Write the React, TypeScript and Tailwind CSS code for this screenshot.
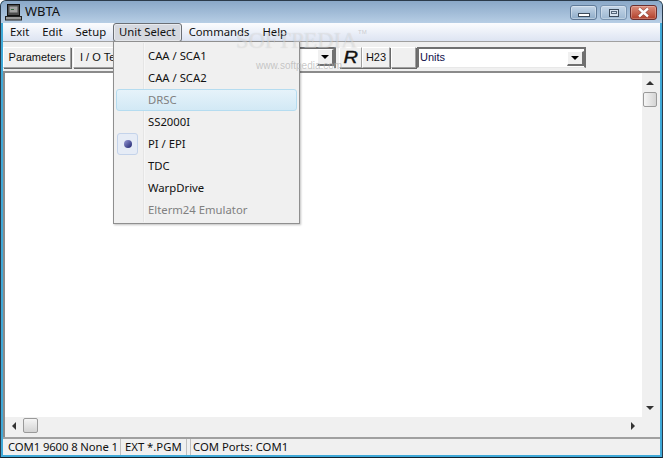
import { useState } from "react";

const menus = ["Exit", "Edit", "Setup", "Unit Select", "Commands", "Help"];

const units = [
  { label: "CAA / SCA1" },
  { label: "CAA / SCA2" },
  { label: "DRSC", disabled: true, hot: true },
  { label: "SS2000I" },
  { label: "PI / EPI", checked: true },
  { label: "TDC" },
  { label: "WarpDrive" },
  { label: "Elterm24 Emulator", disabled: true },
];

function CaptionButtons() {
  return (
    <div className="flex self-start gap-[3px] mr-[5px] mt-[4px]">
      <div className="w-[27px] h-[15px] rounded-[3px] border border-[#5f7a98] shadow-[inset_0_0_0_1px_rgba(255,255,255,0.35)] bg-gradient-to-b from-[#c5d6e8] to-[#8dabc8] flex items-end justify-center pb-[2px]">
        <div className="w-[12px] h-[4px] border border-[#3c4a5a] bg-white" />
      </div>
      <div className="w-[27px] h-[15px] rounded-[3px] border border-[#7893b0] shadow-[inset_0_0_0_1px_rgba(255,255,255,0.3)] bg-gradient-to-b from-[#c5d6e8] to-[#9db8d2] flex items-center justify-center">
        <div className="w-[10px] h-[8px] border border-[#3c4a5a] bg-[#d7e2ee] flex items-center justify-center">
          <div className="w-[6px] h-[3px] border border-[#56677a]" />
        </div>
      </div>
      <div className="w-[27px] h-[15px] rounded-[3px] border border-[#6b2e2e] shadow-[inset_0_0_0_1px_rgba(255,255,255,0.25)] bg-gradient-to-b from-[#dc8d7c] to-[#b03d28] flex items-center justify-center">
        <svg width="15" height="11" viewBox="0 0 15 11">
          <path d="M3 1.5l9 8M12 1.5l-9 8" stroke="#5a2a2a" strokeWidth="3.6" strokeOpacity="0.6" />
          <path d="M3 1.5l9 8M12 1.5l-9 8" stroke="#fff" strokeWidth="2.4" />
        </svg>
      </div>
    </div>
  );
}

function ToolButton({ children, className }: { children?: React.ReactNode; className: string }) {
  return (
    <div
      className={`h-[21px] flex items-center justify-center bg-[#f0f0f0] border border-t-white border-l-white border-r-[#a0a0a0] border-b-[#a0a0a0] shadow-[1px_1px_0_#696969] text-[11px] text-[#111] ${className}`}
    >
      {children}
    </div>
  );
}

function ComboArrow({ className }: { className?: string }) {
  return (
    <div
      className={`w-[17px] bg-[#f0f0f0] border-t border-l border-t-white border-l-white border-r-2 border-b-2 border-r-[#707070] border-b-[#707070] flex items-center justify-center ${className}`}
    >
      <div className="border-x-[4px] border-x-transparent border-t-[4px] border-t-black" />
    </div>
  );
}

export default function App() {
  const [unit] = useState("PI / EPI");

  return (
    <div className="relative w-[663px] h-[458px] overflow-hidden flex flex-col bg-[#3fa9d8] font-['Noto_Sans',sans-serif] border border-t-[#2b3a4a] border-x-[#2b3a4a] border-b-[#10202c] rounded-t-[6px]">
      {/* title bar */}
      <div className="h-[22px] flex items-center pl-[4px] shrink-0 bg-gradient-to-b from-[#8aa8c8] to-[#b7cee5]">
        <svg width="17" height="17" viewBox="0 0 17 17" className="mr-[3px]">
          <rect x="2.5" y="0.5" width="12" height="11" fill="#4d4d4d" stroke="#111" />
          <rect x="4.5" y="2.5" width="8" height="6" fill="#a3a3a3" />
          <rect x="6" y="5" width="3" height="1" fill="#3a6f46" />
          <rect x="0.5" y="12.5" width="16" height="3.5" fill="#9a9a9a" stroke="#222" />
        </svg>
        <span className="text-[13px] text-[#111] flex-1">WBTA</span>
        <CaptionButtons />
      </div>

      <div className="h-[432px] mx-[2px] bg-[#f0f0f0] flex flex-col min-h-0">
        {/* menu bar */}
        <div className="h-[19px] flex items-center bg-gradient-to-b from-[#fbfcfe] to-[#dde4f2] border-b border-[#a0a0a0] text-[11.3px] text-[#111] shrink-0 pl-[0.5px]">
          {menus.map((m) => (
            <div
              key={m}
              className={`h-[19px] flex items-center ${
                m === "Unit Select"
                  ? "mx-[0.5px] px-[5px] rounded-[3px] bg-[#d5d8df] border border-[#6b6f75] shadow-[inset_0_0_0_1px_#e8eaee]"
                  : "px-[6.5px]"
              }`}
            >
              {m}
            </div>
          ))}
        </div>

        {/* toolbar */}
        <div className="h-[31px] flex items-start pt-[5px] border-b-2 border-[#8b8b8b] shrink-0 font-['Liberation_Sans',sans-serif]">
          <ToolButton className="w-[68px]">Parameters</ToolButton>
          <ToolButton className="w-[60px] ml-[2px] justify-start pl-[6px]">I / O Test</ToolButton>
          <div className="w-[201px] ml-[2px] h-[21px] bg-white border-t-2 border-x-2 border-[#707070] flex items-start justify-end">
            <ComboArrow className="h-[17px]" />
          </div>
          <ToolButton className="w-[23px] ml-[3px]">
            <span className="italic text-[16px] scale-x-125 [-webkit-text-stroke:0.4px_#111]">R</span>
          </ToolButton>
          <ToolButton className="w-[28px]">H23</ToolButton>
          <ToolButton className="w-[25px] ml-[1px]" />
          <div className="w-[169px] ml-[1px] h-[21px] bg-white border-t-2 border-x-2 border-[#707070] border-b border-b-[#e8e8e8] flex items-start justify-between pl-[1px] text-[11px] text-[#10104a] leading-[17px]">
            <span>Units</span>
            <ComboArrow className="h-[15px] mt-[2px]" />
          </div>
        </div>

        {/* client */}
        <div className="flex-1 flex flex-col min-h-0 border-l-2 border-l-[#8b8b8b]">
          <div className="flex-1 flex min-h-0">
            <div className="flex-1 bg-white" />
            <div className="w-[18px] pr-[2px] bg-[#f0f0f0] flex flex-col items-center pt-[8px]">
              <div className="border-x-[4px] border-x-transparent border-b-[4px] border-b-[#333]" />
              <div className="mt-[7px] w-[14px] h-[15px] rounded-[2px] border border-[#9a9a9a] bg-gradient-to-r from-[#f5f5f5] to-[#d4d4d4]" />
              <div className="flex-1" />
              <div className="mb-[7px] border-x-[4px] border-x-transparent border-t-[4px] border-t-[#333]" />
            </div>
          </div>
          <div className="h-[20px] flex items-start pt-[1px] shrink-0 bg-[#f0f0f0] pl-[7px]">
            <div className="mt-[4px] border-y-[4px] border-y-transparent border-r-[4px] border-r-[#333]" />
            <div className="ml-[7px] w-[15px] h-[15px] rounded-[2px] border border-[#9a9a9a] bg-gradient-to-b from-[#f5f5f5] to-[#d4d4d4]" />
            <div className="flex-1" />
            <div className="mt-[4px] mr-[25px] border-y-[4px] border-y-transparent border-l-[4px] border-l-[#333]" />
          </div>
        </div>

        {/* status bar */}
        <div className="h-[18px] flex border-t-2 border-[#a0a0a0] text-[11.3px] text-[#111] shrink-0 leading-[16px]">
          <div className="w-[115px] pl-[5px] whitespace-nowrap tracking-[-0.1px]">COM1 9600 8 None 1</div>
          <div className="w-[67px] ml-[2px] pl-[4px] border-x border-[#c0c0c0] whitespace-nowrap">EXT *.PGM</div>
          <div className="flex-1 ml-[3px] pl-[2px] border-l border-[#c0c0c0] whitespace-nowrap">COM Ports: COM1</div>
        </div>
      </div>

      {/* dropdown */}
      <div className="absolute left-[112px] top-[40px] w-[187px] h-[183px] bg-[#f0f0f0] border border-[#8f8f8f] shadow-[1px_1px_2px_rgba(0,0,0,0.25)] text-[11.3px] text-[#111] pt-[3px] px-[2px]">
        <div className="absolute left-[29px] top-[1px] bottom-[1px] w-[2px] bg-gradient-to-r from-[#dcdcdc] to-white" />
        {units.map((u) => (
          <div
            key={u.label}
            className={`relative h-[22px] flex items-center rounded-[3px] ${
              u.disabled ? "text-[#808080]" : ""
            } ${u.hot ? "pl-[31px] bg-gradient-to-b from-[#e6f3fa] to-[#d2e9f5] border border-[#b5dcf0]" : "pl-[32px]"}`}
          >
            {u.label === unit && (
              <div className="absolute left-[1px] top-0 w-[21px] h-[22px] rounded-[3px] bg-[#e6ecf6] border border-[#c4d3ea] flex items-center justify-center">
                <div className="w-[8px] h-[8px] rounded-full bg-gradient-to-br from-[#9a9ad6] to-[#23236e]" />
              </div>
            )}
            {u.label}
          </div>
        ))}
      </div>

      {/* watermark */}
      <div className="absolute left-[235px] top-[29px] text-[22.5px] leading-none text-white/40 [text-shadow:0_0_1px_rgba(0,0,0,0.15)] font-['Liberation_Serif',serif] pointer-events-none">
        SOFTPEDIA
      </div>
      <div className="absolute left-[357px] top-[28px] text-[6px] leading-none text-[#bbb]/70 font-['Liberation_Sans',sans-serif] pointer-events-none">
        TM
      </div>
      <div className="absolute left-[255px] top-[57px] text-[10px] text-[#b0b0b0]/70 font-['Liberation_Sans',sans-serif] pointer-events-none">
        www.softpedia.com
      </div>
    </div>
  );
}
